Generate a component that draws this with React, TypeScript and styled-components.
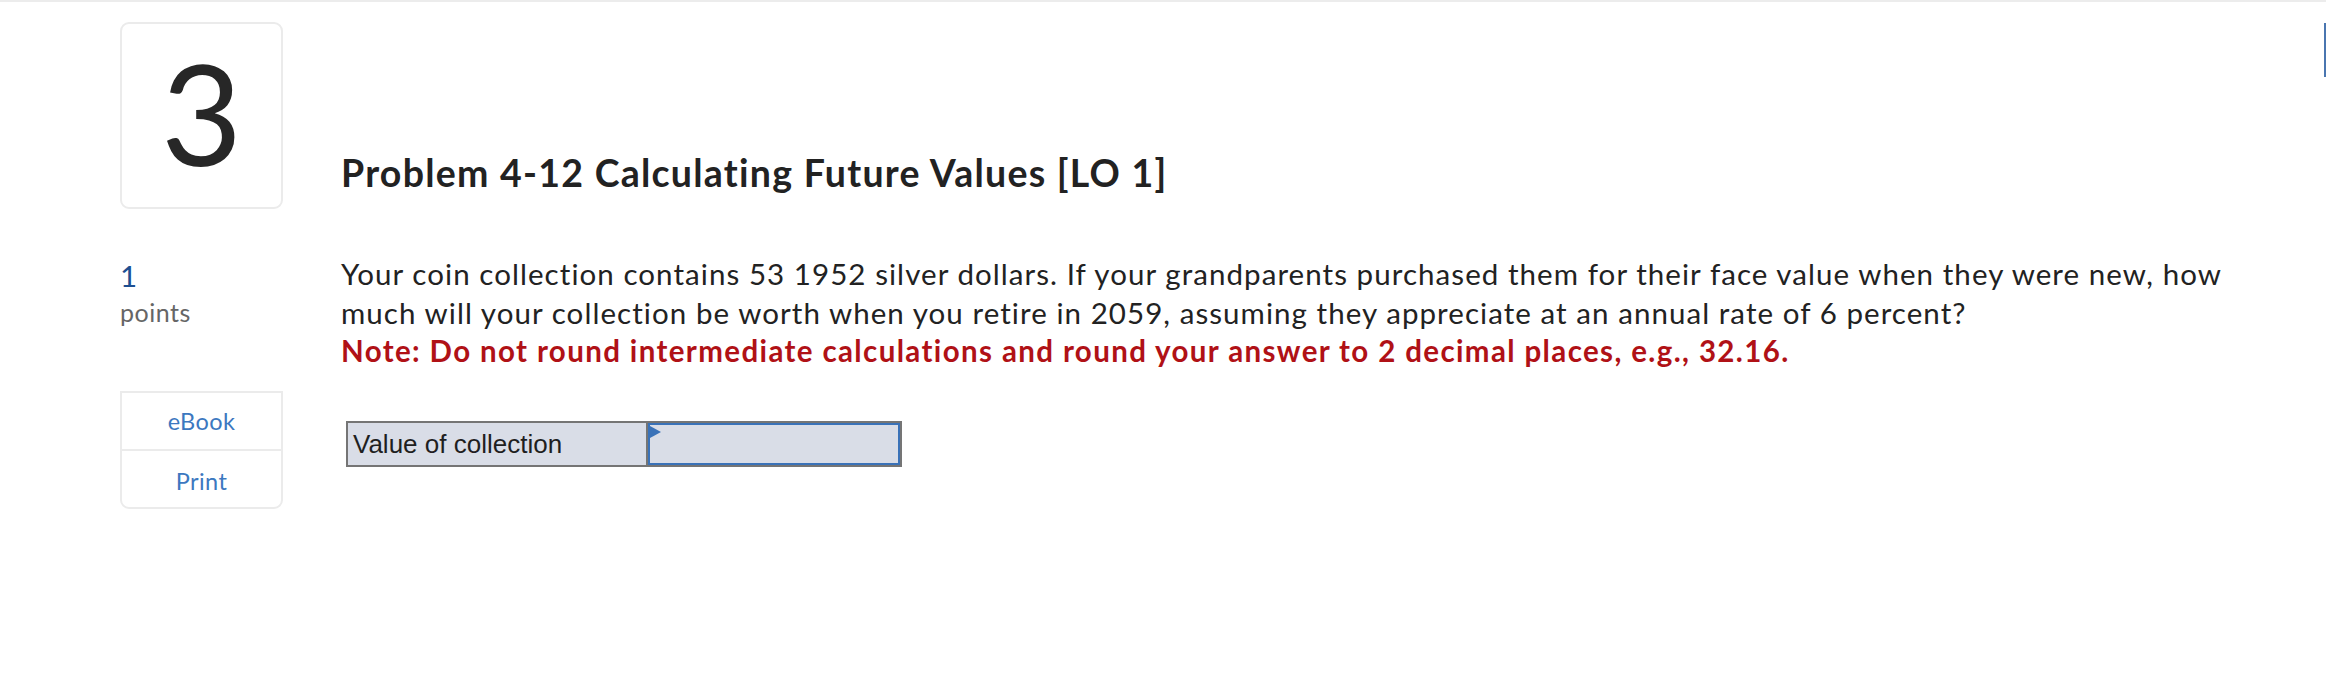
import React from "react";
import styled, { createGlobalStyle } from "styled-components";

const GlobalStyle = createGlobalStyle`
  html, body { margin: 0; padding: 0; background: #ffffff; }
  body {
    font-family: Lato, "Open Sans", sans-serif;
    color: #222222;
    font-variant-ligatures: none;
    font-feature-settings: "liga" 0, "clig" 0;
  }
`;

const Page = styled.div`
  position: relative;
  width: 2326px;
  height: 684px;
  box-sizing: border-box;
  border-top: 2px solid #ececec;
  padding: 20px 0 0 120px;
  overflow: hidden;
`;

const ScrollMark = styled.div`
  position: absolute;
  right: 0;
  top: 21px;
  width: 2px;
  height: 54px;
  background: #4a76b0;
`;

const Layout = styled.div`
  display: grid;
  grid-template-columns: 163px 1910px;
  column-gap: 58px;
  align-items: end;
`;

const NumberBox = styled.div`
  box-sizing: border-box;
  width: 163px;
  height: 187px;
  border: 2px solid #ebebeb;
  border-radius: 9px;
  display: flex;
  align-items: center;
  justify-content: center;
  padding-bottom: 8px;
  font-size: 140px;
  line-height: 1;
  font-weight: 400;
  color: #272727;
`;

const Title = styled.h2`
  margin: 0 0 14px 0;
  font-size: 37.5px;
  line-height: 44px;
  font-weight: 700;
  letter-spacing: 1.25px;
  color: #222222;
`;

const Aside = styled.div`
  align-self: start;
  display: flex;
  flex-direction: column;
`;

const Points = styled.div`
  margin-top: 48px;
  display: flex;
  flex-direction: column;
`;

const PointValue = styled.span`
  font-size: 29.5px;
  line-height: 38.5px;
  color: #1d4f91;
`;

const PointLabel = styled.span`
  font-size: 25px;
  line-height: 32px;
  letter-spacing: 0.5px;
  color: #666666;
`;

const ResourceBox = styled.div`
  margin-top: 63.5px;
  box-sizing: border-box;
  width: 163px;
  border: 2px solid #ebebeb;
  border-radius: 0 0 9px 9px;
  display: flex;
  flex-direction: column;
`;

const ResourceLink = styled.a<{ $divided?: boolean }>`
  box-sizing: border-box;
  height: ${(p) => (p.$divided ? "58px" : "56px")};
  padding-top: ${(p) => (p.$divided ? "4px" : "0")};
  display: flex;
  align-items: center;
  justify-content: center;
  font-size: 23.5px;
  letter-spacing: 0.4px;
  color: #3c78c0;
  text-decoration: none;
  border-top: ${(p) => (p.$divided ? "2px solid #ebebeb" : "none")};
`;

const Main = styled.div`
  align-self: start;
  display: flex;
  flex-direction: column;
  align-items: flex-start;
`;

const Question = styled.p`
  margin: 46px 0 0 0;
  font-size: 29.5px;
  line-height: 38.5px;
  letter-spacing: 1.06px;
  color: #222222;
`;

const Note = styled.strong`
  display: block;
  font-weight: 700;
  letter-spacing: 1.37px;
  color: #b01116;
`;

const AnswerTable = styled.div`
  margin: 50px 0 0 5px;
  box-sizing: border-box;
  width: 556px;
  height: 46px;
  border: 2px solid #757575;
  background: #d9dde7;
  display: grid;
  grid-template-columns: 300px 1fr;
`;

const LabelCell = styled.div`
  border-right: 2px solid #757575;
  padding-left: 5px;
  font-family: "Liberation Sans", Arial, sans-serif;
  font-size: 26px;
  line-height: 42px;
  color: #1f1f1f;
`;

const InputCell = styled.div`
  position: relative;
  box-sizing: border-box;
  border: 2px solid #3a72b8;
  background: #d9dde7;
`;

const Marker = styled.span`
  position: absolute;
  left: 0;
  top: 1px;
  width: 0;
  height: 0;
  border-left: 11px solid #3a72b8;
  border-top: 6px solid transparent;
  border-bottom: 6px solid transparent;
`;

export default function App() {
  return (
    <>
      <GlobalStyle />
      <Page>
        <ScrollMark />
        <Layout>
          <NumberBox>3</NumberBox>
          <Title>Problem 4-12 Calculating Future Values [LO 1]</Title>
          <Aside>
            <Points>
              <PointValue>1</PointValue>
              <PointLabel>points</PointLabel>
            </Points>
            <ResourceBox>
              <ResourceLink href="#">eBook</ResourceLink>
              <ResourceLink href="#" $divided>
                Print
              </ResourceLink>
            </ResourceBox>
          </Aside>
          <Main>
            <Question>
              Your coin collection contains 53 1952 silver dollars. If your grandparents purchased them for
              their face value when they were new, how much will your collection be worth when you retire in
              2059, assuming they appreciate at an annual rate of 6 percent?
              <Note>
                Note: Do not round intermediate calculations and round your answer to 2 decimal places, e.g.,
                32.16.
              </Note>
            </Question>
            <AnswerTable>
              <LabelCell>Value of collection</LabelCell>
              <InputCell>
                <Marker />
              </InputCell>
            </AnswerTable>
          </Main>
        </Layout>
      </Page>
    </>
  );
}
